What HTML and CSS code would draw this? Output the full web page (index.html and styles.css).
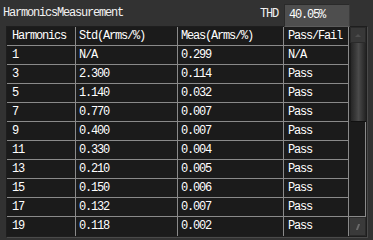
FILE: index.html
```html
<!DOCTYPE html>
<html>
<head>
<meta charset="utf-8">
<link rel="stylesheet" href="styles.css">
</head>
<body>
<div class="app">
  <div class="topbar">
    <span class="title">HarmonicsMeasurement</span>
    <span class="thd-label">THD</span>
    <span class="thd-box">40.05%</span>
  </div>
  <div class="frame">
    <div class="grid">
      <div class="row head"><div class="c c1">Harmonics</div><div class="c c2">Std(Arms/%)</div><div class="c c3">Meas(Arms/%)</div><div class="c c4">Pass/Fail</div></div>
      <div class="row"><div class="c c1">1</div><div class="c c2">N/A</div><div class="c c3">0.299</div><div class="c c4">N/A</div></div>
      <div class="row"><div class="c c1">3</div><div class="c c2">2.300</div><div class="c c3">0.114</div><div class="c c4">Pass</div></div>
      <div class="row"><div class="c c1">5</div><div class="c c2">1.140</div><div class="c c3">0.032</div><div class="c c4">Pass</div></div>
      <div class="row"><div class="c c1">7</div><div class="c c2">0.770</div><div class="c c3">0.007</div><div class="c c4">Pass</div></div>
      <div class="row"><div class="c c1">9</div><div class="c c2">0.400</div><div class="c c3">0.007</div><div class="c c4">Pass</div></div>
      <div class="row"><div class="c c1">11</div><div class="c c2">0.330</div><div class="c c3">0.004</div><div class="c c4">Pass</div></div>
      <div class="row"><div class="c c1">13</div><div class="c c2">0.210</div><div class="c c3">0.005</div><div class="c c4">Pass</div></div>
      <div class="row"><div class="c c1">15</div><div class="c c2">0.150</div><div class="c c3">0.006</div><div class="c c4">Pass</div></div>
      <div class="row"><div class="c c1">17</div><div class="c c2">0.132</div><div class="c c3">0.007</div><div class="c c4">Pass</div></div>
      <div class="row last"><div class="c c1">19</div><div class="c c2">0.118</div><div class="c c3">0.002</div><div class="c c4">Pass</div></div>
    </div>
    <div class="scrollbar">
      <div class="sb-btn up"><span class="arrow-up"></span></div>
      <div class="thumb"></div>
      <div class="track"></div>
      <div class="sb-btn down"><span class="arrow-down"></span></div>
    </div>
  </div>
</div>
</body>
</html>
```
FILE: styles.css
```css
html, body {
  margin: 0;
  padding: 0;
  background: #323232;
}
.app {
  width: 373px;
  height: 240px;
  background: #323232;
  font-family: "Liberation Mono", "DejaVu Sans Mono", monospace;
  font-size: 12px;
  letter-spacing: -1.2px;
  color: #ffffff;
  overflow: hidden;
}
.topbar {
  height: 26px;
  display: flex;
  align-items: center;
}
.title {
  padding-left: 3px;
  margin-top: 0;
  color: #f2f2f2;
  flex: 1;
}
.thd-label {
  margin-right: 6px;
  margin-top: 1px;
  color: #f2f2f2;
}
.thd-box {
  box-sizing: border-box;
  width: 66px;
  height: 23px;
  margin-right: 23px;
  margin-top: 4px;
  padding-left: 4px;
  line-height: 21px;
  background: #4e4e4e;
  border-top: 1px solid #2a2a2a;
  border-left: 1px solid #2a2a2a;
  border-bottom: 1px solid #5c5c5c;
  border-right: 1px solid #3c3c3c;
}
.frame {
  margin-left: 6px;
  width: 361px;
  height: 211px;
  box-sizing: border-box;
  border: 1px solid #1e1e1e;
  box-shadow: 1px 1px 0 #4a4a4a;
  display: flex;
  background: #1b1b1b;
}
.grid {
  width: 342px;
  display: flex;
  flex-direction: column;
}
.row {
  display: flex;
  height: 19px;
  box-sizing: border-box;
  border-bottom: 1px solid #8a8a8a;
}
.row.last {
  border-bottom: none;
}
.c {
  box-sizing: border-box;
  border-right: 1px solid #8a8a8a;
  padding-left: 5px;
  line-height: 18px;
  white-space: nowrap;
}
.c1 { width: 69px; }
.c2 { width: 102px; padding-left: 3px; }
.c3 { width: 106px; padding-left: 3px; }
.c4 { width: 65px; padding-left: 4px; }
.scrollbar {
  width: 17px;
  display: flex;
  flex-direction: column;
  background: #1b1b1b;
}
.sb-btn {
  display: flex;
  align-items: center;
  justify-content: center;
  background: #383838;
  box-sizing: border-box;
}
.sb-btn.up {
  height: 16px;
  margin-left: 1px;
  border: 1px solid #2a2a2a;
}
.sb-btn.down {
  height: 19px;
  border: 1px solid #2a2a2a;
  background: #3a3a3a;
}
.arrow-up {
  width: 0;
  height: 0;
  border-left: 3px solid transparent;
  border-right: 3px solid transparent;
  border-bottom: 3px solid #4e4e4e;
}
.arrow-down {
  width: 2px;
  height: 6px;
  background: #6a6a6a;
  transform: skewX(-20deg);
}
.thumb {
  height: 78px;
  margin-left: 2px;
  background: linear-gradient(to right, #262626 0%, #3a3a3a 30%, #4a4a4a 50%, #3a3a3a 70%, #222222 100%);
  border-bottom: 1px solid #111;
}
.track {
  flex: 1;
  border-right: 1px solid #8a8a8a;
  border-bottom: 1px solid #8a8a8a;
  background: #1b1b1b;
}
```
